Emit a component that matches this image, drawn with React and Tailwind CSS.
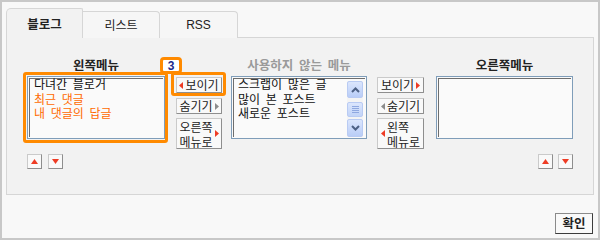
import React from 'react';

const ORANGE = 'border-[#ff8a00]';

function Tri({ dir, gray }) {
  const fill = gray ? '#8c8c8c' : '#ee3b24';
  const pts = {
    left: '4,0 4,7 0,3.5',
    right: '0,0 0,7 4,3.5',
    up: '0,5 3.5,0 7,5',
    down: '0,0 7,0 3.5,5',
  }[dir];
  const w = dir === 'up' || dir === 'down' ? 7 : 4;
  const h = dir === 'up' || dir === 'down' ? 5 : 7;
  return (
    <svg width={w} height={h} viewBox={`0 0 ${w} ${h}`} className="shrink-0">
      <polygon points={pts} fill={fill} />
    </svg>
  );
}

function Btn({ children, tall }) {
  return (
    <div className={`flex items-center justify-center gap-[2px] border border-[#cacaca] border-r-[#8e8e8e] border-b-[#8e8e8e] bg-[#f9f9f9] text-[#222] rounded-[1px] leading-[14px] ${tall ? 'h-[31px]' : 'h-[16px]'}`}>
      {children}
    </div>
  );
}

function MiniBtn({ dir }) {
  return (
    <div className="w-[15px] h-[15px] flex items-center justify-center border border-[#cacaca] border-r-[#8e8e8e] border-b-[#8e8e8e] bg-[#f9f9f9]">
      <Tri dir={dir} />
    </div>
  );
}

function ListBox({ items, children }) {
  return (
    <div className="h-[63px] border border-[#7f9db9] p-px bg-[#fafafa]">
      <div className="h-full flex border-t border-l border-[#6e6e6e]">
        <div className="flex-1 -mt-[2px] pl-[4px] leading-[14.5px] [word-spacing:3px]">
          {items.map((it) => (
            <div key={it.text} className={it.orange ? 'text-[#ff6a00]' : 'text-[#111]'}>{it.text}</div>
          ))}
        </div>
        {children}
      </div>
    </div>
  );
}

function ScrollBtn({ up }) {
  return (
    <div className="h-[18px] rounded-[2px] border border-[#b9cbf3] bg-gradient-to-b from-[#dbe6fd] to-[#b9cdf7] flex items-center justify-center">
      <svg width="9" height="6" viewBox="0 0 9 6">
        <polyline points={up ? '1,5 4.5,1.5 8,5' : '1,1 4.5,4.5 8,1'} fill="none" stroke="#4d6185" strokeWidth="2" />
      </svg>
    </div>
  );
}

function Scrollbar() {
  return (
    <div className="w-[16px] mr-[2px] mt-[2px] flex flex-col bg-[#f4f4f4]">
      <ScrollBtn up />
      <div className="mt-[4px] h-[15px] rounded-[2px] border border-[#b9cbf3] bg-gradient-to-b from-[#dbe6fd] to-[#c2d4f8] flex flex-col items-center justify-center gap-[1px]">
        <div className="w-[7px] h-px bg-[#8fa8e0]" />
        <div className="w-[7px] h-px bg-[#8fa8e0]" />
        <div className="w-[7px] h-px bg-[#8fa8e0]" />
        <div className="w-[7px] h-px bg-[#8fa8e0]" />
      </div>
      <div className="mt-[2px]">
        <ScrollBtn />
      </div>
    </div>
  );
}

export default function App() {
  return (
    <div className="w-[600px] h-[240px] border-2 border-[#c8c8c8] bg-[#f8f8f8] text-[12px] font-['Noto_Sans_CJK_KR',sans-serif]">
      <div className="pl-[4px] pt-[6px]">
        <div className="flex items-end h-[30px]">
          <div className="relative z-10 w-[77px] h-[30px] border border-b-0 border-[#d6d6d6] rounded-tl-[5px] rounded-tr-[2px] bg-[#f2f2f2] flex items-center justify-center pt-[1px] font-bold text-[12.5px] text-[#222]">
            블로그
          </div>
          <div className="w-[77px] h-[27px] border-t border-r border-[#d6d6d6] rounded-tr-[4px] bg-[#f6f6f6] flex items-center justify-center text-[#222] [word-spacing:2px]">
            리스트
          </div>
          <div className="w-[78px] h-[27px] border-t border-r border-[#d6d6d6] rounded-tr-[4px] bg-[#f6f6f6] flex items-center justify-center text-[#222] font-['Liberation_Sans',sans-serif]">
            RSS
          </div>
        </div>

        <div className="-mt-px w-[588px] h-[158px] border border-[#d6d6d6] bg-[#f2f2f2] pl-[20px] pt-[19px] flex items-start">
          <div className="w-[138px]">
            <div className="h-[16px] leading-[16px] text-center font-bold text-[12.5px] text-[#222]">왼쪽메뉴</div>
            <div className="relative mt-[3px]">
              <ListBox
                items={[
                  { text: '다녀간 블로거' },
                  { text: '최근 댓글', orange: true },
                  { text: '내 댓글의 답글', orange: true },
                ]}
              />
              <div className={`absolute -left-[4px] -top-[4px] -right-[3px] -bottom-[4px] border-[3px] ${ORANGE} rounded-[3px]`} />
            </div>
            <div className="mt-[15px] flex gap-[6px]">
              <MiniBtn dir="up" />
              <MiniBtn dir="down" />
            </div>
          </div>

          <div className="ml-[11px] w-[46px] pt-[20px] flex flex-col">
            <div className="relative">
              <Btn><Tri dir="left" /><span>보이기</span></Btn>
              <div className={`absolute -left-[5px] -top-[5px] -right-[4px] -bottom-[3px] border-[3px] ${ORANGE} rounded-[3px]`} />
              <div className={`absolute -left-[16px] -top-[20px] w-[22px] h-[17px] z-10 bg-white border-[3px] ${ORANGE} rounded-[4px] flex items-center justify-center text-[12px] font-bold leading-none text-[#1c2a8c] font-['Liberation_Sans',sans-serif]`}>
                3
              </div>
            </div>
            <div className="mt-[5px]">
              <Btn><span>숨기기</span><Tri dir="right" gray /></Btn>
            </div>
            <div className="mt-[4px]">
              <Btn tall>
                <div className="leading-[15px]">
                  <div>오른쪽</div>
                  <div>메뉴로</div>
                </div>
                <Tri dir="right" />
              </Btn>
            </div>
          </div>

          <div className="ml-[9px] w-[136px]">
            <div className="h-[16px] leading-[16px] text-center font-bold text-[12.5px] text-[#9a9a9a] [word-spacing:3px]">사용하지 않는 메뉴</div>
            <div className="mt-[3px]">
              <ListBox
                items={[
                  { text: '스크랩이 많은 글' },
                  { text: '많이 본 포스트' },
                  { text: '새로운 포스트' },
                ]}
              >
                <Scrollbar />
              </ListBox>
            </div>
          </div>

          <div className="ml-[10px] w-[47px] pt-[20px] flex flex-col">
            <Btn><span>보이기</span><Tri dir="right" /></Btn>
            <div className="mt-[5px]">
              <Btn><Tri dir="left" gray /><span>숨기기</span></Btn>
            </div>
            <div className="mt-[4px]">
              <Btn tall>
                <Tri dir="left" />
                <div className="leading-[15px]">
                  <div>왼쪽</div>
                  <div>메뉴로</div>
                </div>
              </Btn>
            </div>
          </div>

          <div className="ml-[12px] w-[137px]">
            <div className="h-[16px] leading-[16px] text-center font-bold text-[12.5px] text-[#222]">오른쪽메뉴</div>
            <div className="mt-[3px]">
              <ListBox items={[]} />
            </div>
            <div className="mt-[15px] flex justify-end gap-[5px]">
              <MiniBtn dir="up" />
              <MiniBtn dir="down" />
            </div>
          </div>
        </div>
      </div>

      <div className="mt-[18px] pr-[5px] flex justify-end">
        <div className="w-[38px] h-[21px] border border-[#8a8a8a] border-r-[#3c3c3c] border-b-[#3c3c3c] bg-[#f9f9f9] flex items-center justify-center font-bold text-[12.5px] text-[#222]">
          확인
        </div>
      </div>
    </div>
  );
}
